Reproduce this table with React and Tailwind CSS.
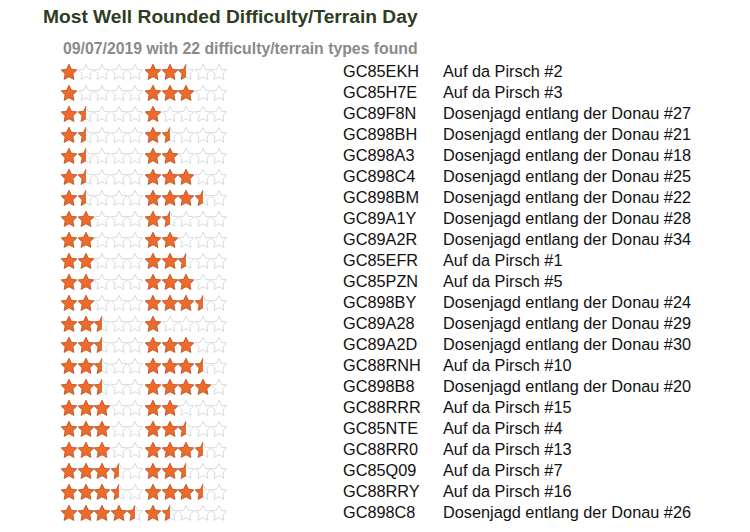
const rows = [
  [1, 2.5, 'GC85EKH', 'Auf da Pirsch #2'],
  [1, 3, 'GC85H7E', 'Auf da Pirsch #3'],
  [1.5, 1, 'GC89F8N', 'Dosenjagd entlang der Donau #27'],
  [1.5, 1.5, 'GC898BH', 'Dosenjagd entlang der Donau #21'],
  [1.5, 2, 'GC898A3', 'Dosenjagd entlang der Donau #18'],
  [1.5, 3, 'GC898C4', 'Dosenjagd entlang der Donau #25'],
  [1.5, 3.5, 'GC898BM', 'Dosenjagd entlang der Donau #22'],
  [2, 1.5, 'GC89A1Y', 'Dosenjagd entlang der Donau #28'],
  [2, 2, 'GC89A2R', 'Dosenjagd entlang der Donau #34'],
  [2, 2.5, 'GC85EFR', 'Auf da Pirsch #1'],
  [2, 3, 'GC85PZN', 'Auf da Pirsch #5'],
  [2, 3.5, 'GC898BY', 'Dosenjagd entlang der Donau #24'],
  [2.5, 1, 'GC89A28', 'Dosenjagd entlang der Donau #29'],
  [2.5, 3, 'GC89A2D', 'Dosenjagd entlang der Donau #30'],
  [2.5, 3.5, 'GC88RNH', 'Auf da Pirsch #10'],
  [2.5, 4, 'GC898B8', 'Dosenjagd entlang der Donau #20'],
  [3, 2, 'GC88RRR', 'Auf da Pirsch #15'],
  [3, 2.5, 'GC85NTE', 'Auf da Pirsch #4'],
  [3, 3.5, 'GC88RR0', 'Auf da Pirsch #13'],
  [3.5, 2.5, 'GC85Q09', 'Auf da Pirsch #7'],
  [3.5, 3.5, 'GC88RRY', 'Auf da Pirsch #16'],
  [4.5, 1.5, 'GC898C8', 'Dosenjagd entlang der Donau #26'],
]

// five-point star, a little chunky like the old rating gifs
const STAR = '8,0.3 10.4,5.3 15.8,5.9 11.8,9.8 12.9,15.4 8,12.7 3.1,15.4 4.2,9.8 0.2,5.9 5.6,5.3'

function Star({ fill }) {
  return (
    <svg width="16" height="16" viewBox="0 0 16 16">
      <polygon points={STAR} fill="#fff" stroke="#cdd1d4" strokeWidth="0.8" strokeLinejoin="round" />
      {fill > 0 && (
        <svg width={fill === 1 ? 16 : 8} height="16" viewBox={fill === 1 ? '0 0 16 16' : '0 0 8 16'}>
          <polygon points={STAR} fill="#ec6a2b" stroke="#c4511c" strokeWidth="0.8" strokeLinejoin="round" />
        </svg>
      )}
    </svg>
  )
}

function Rating({ value }) {
  return (
    <div className="flex gap-[0.5px] w-[82px]">
      {[0, 1, 2, 3, 4].map(i => (
        <Star key={i} fill={value >= i + 1 ? 1 : value >= i + 0.5 ? 0.5 : 0} />
      ))}
    </div>
  )
}

export default function App() {
  return (
    <div className="min-h-screen bg-white pt-[6px] pl-[43px] font-['Liberation_Sans',Arial,sans-serif]">
      <h1 className="text-[19.2px] font-bold leading-[22px] text-[#2d3d22]">
        Most Well Rounded Difficulty/Terrain Day
      </h1>
      <div className="pl-[18px] mt-[10px]">
        <p className="pl-[2px] text-[15.8px] font-bold leading-[21px] text-[#8a8a8a]">
          09/07/2019 with 22 difficulty/terrain types found
        </p>
        <div className="mt-[2px]">
          {rows.map(([d, t, code, name]) => (
            <div key={code} className="flex items-center h-[21px] text-[16.3px] text-[#111]">
              <div className="flex gap-[2px] w-[282px]">
                <Rating value={d} />
                <Rating value={t} />
              </div>
              <div className="w-[100px]">{code}</div>
              <div>{name}</div>
            </div>
          ))}
        </div>
      </div>
    </div>
  )
}
